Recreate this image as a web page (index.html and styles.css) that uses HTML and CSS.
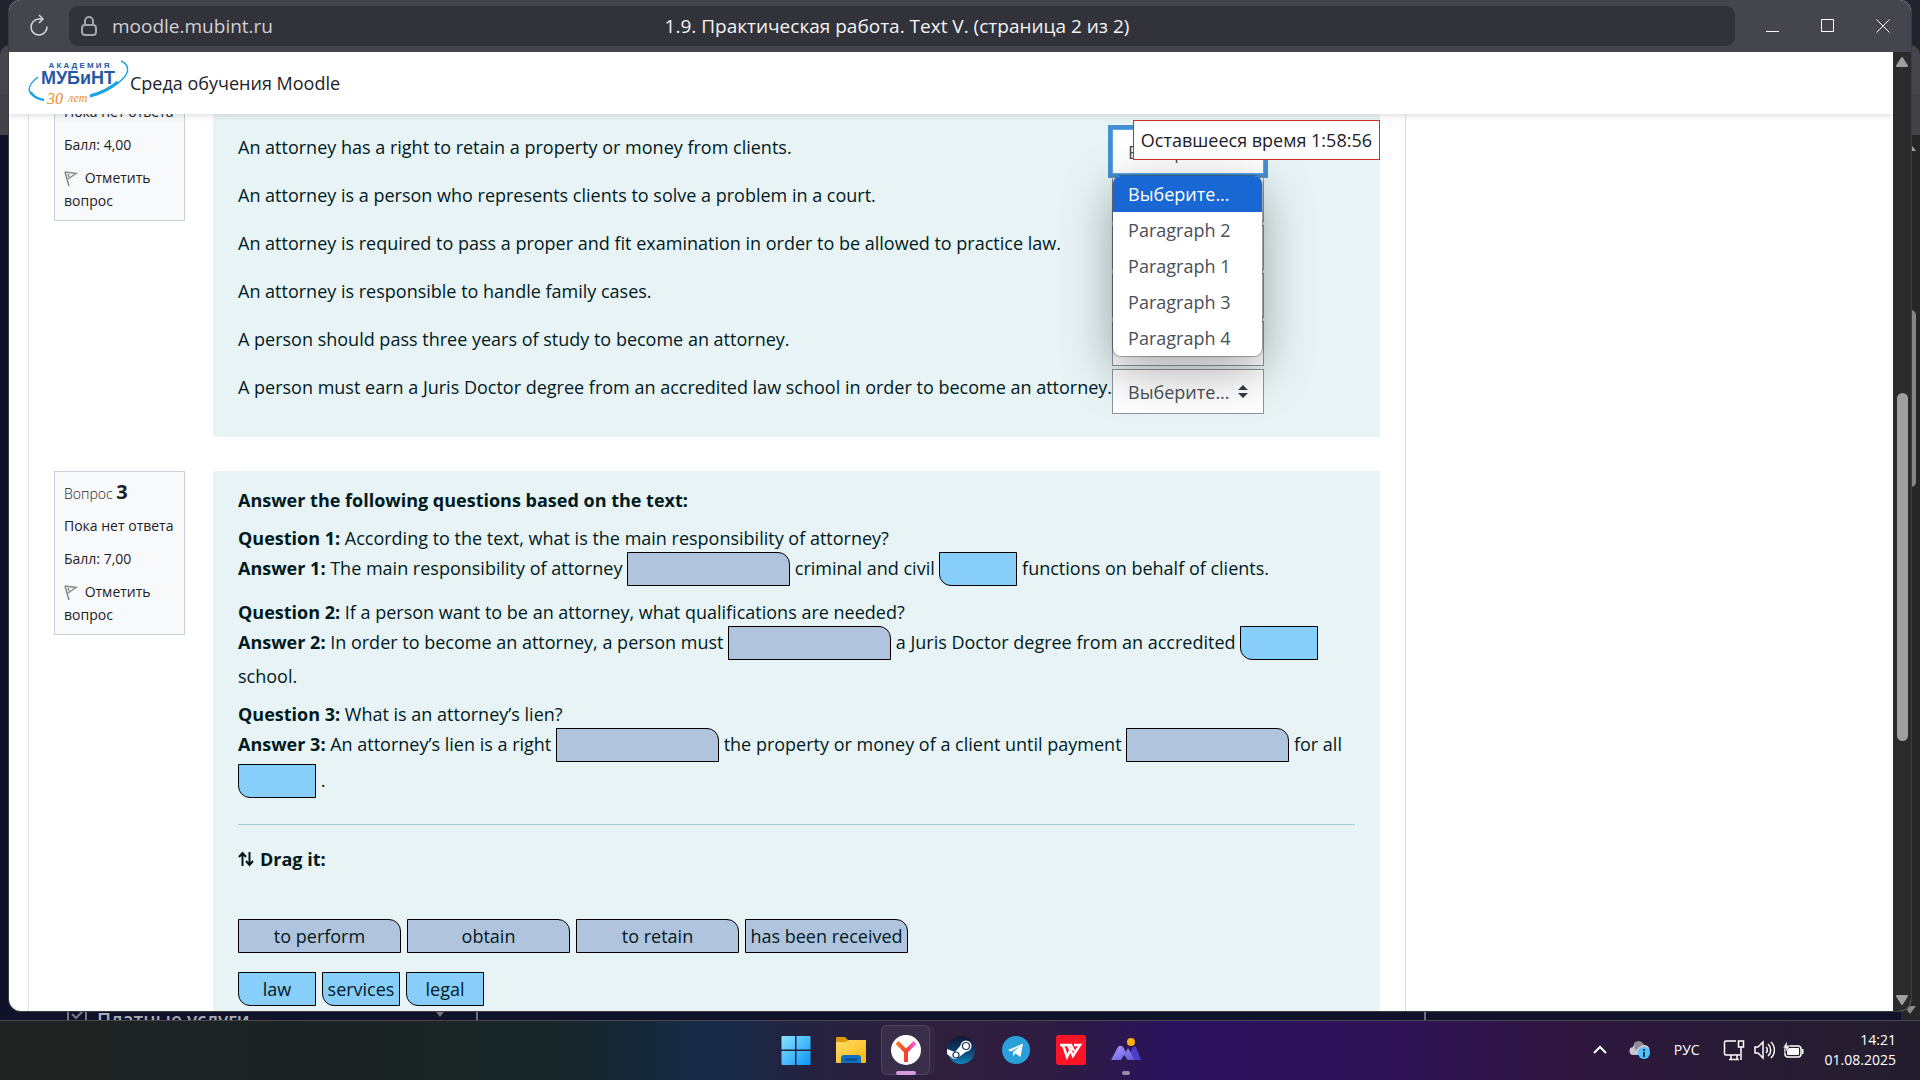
FILE: index.html
```html
<!DOCTYPE html>
<html lang="ru">
<head>
  <meta charset="UTF-8" />
  <meta name="viewport" content="width=device-width, initial-scale=1.0" />
  <title>1.9. Практическая работа. Text V. (страница 2 из 2)</title>
  <link rel="stylesheet" href="styles.css">
</head>
<body>
  <div class="desktop">
    <!-- окно позади -->
    <div class="back-window">
      <div class="back-tabs"></div>
      <div class="back-page"></div>
      <div class="back-scroll">
        <svg class="back-up" width="14" height="10" viewBox="0 0 14 10"><path d="M7 1 13 9H1z" fill="#9f9f9f"/></svg>
        <div class="back-thumb"></div>
        <svg class="back-down" width="14" height="10" viewBox="0 0 14 10"><path d="M1 1h12L7 9z" fill="#8a8a8a"/></svg>
      </div>
      <div class="back-footer">
        <svg width="20" height="20" viewBox="0 0 20 20" fill="none" stroke="#777a86" stroke-width="2"><path d="M1 0v19h18V0"/><path d="m5 4 4 4 7-7"/></svg>
        <span>Платные услуги</span>
        <i class="back-arrow"></i>
        <i class="back-line"></i>
        <i class="back-line back-line-right"></i>
      </div>
    </div>

    <div class="window">
      <header class="titlebar">
        <button class="reload" aria-label="Обновить">
          <svg width="22" height="24" viewBox="0 0 22 24" fill="none" stroke="#d8d8dc" stroke-width="1.500"><path d="M19 12.500A8 8 0 1 1 11 5h4"/><path d="m11 1 4 4-4 4"/></svg>
        </button>
        <div class="address">
          <div class="host">
            <svg width="18" height="20" viewBox="0 0 18 20" fill="none" stroke="#a5a5ac" stroke-width="2"><rect x="2" y="9" width="14" height="10" rx="3"/><path d="M5 9V5a4 4 0 0 1 8 0v4"/></svg>
            <span>moodle.mubint.ru</span>
          </div>
          <div class="page-title">1.9. Практическая работа. Text V. (страница 2 из 2)</div>
        </div>
        <div class="window-buttons">
          <button aria-label="Свернуть"><svg width="14" height="14" viewBox="0 0 14 14"><path d="M0 12.500h13" stroke="#fff"/></svg></button>
          <button aria-label="Развернуть"><svg width="14" height="14" viewBox="0 0 14 14"><path d="M.5.5h12v12H.5z" fill="none" stroke="#fff"/></svg></button>
          <button aria-label="Закрыть"><svg width="14" height="14" viewBox="0 0 14 14"><path d="m.5.5 13 13m0-13-13 13" stroke="#fff"/></svg></button>
        </div>
      </header>

      <div class="viewport">
        <div class="site">
          <nav class="navbar">
            <svg class="logo" width="102" height="46" viewBox="0 0 102 46">
              <path d="M10 17C-3 27-2 36 16 40" fill="none" stroke="#1ba3e8" stroke-width="1.500"/>
              <path d="M3 32c2 4 6 7 13 8" fill="none" stroke="#1ba3e8" stroke-width="2"/>
              <path d="M93 1c12 5 11 21-31 35" fill="none" stroke="#1ba3e8" stroke-width="1.500"/>
              <path d="M62 36c12-3 22-9 28-14" fill="none" stroke="#1ba3e8" stroke-width="3"/>
              <text x="51" y="8" class="logo-top">А К А Д Е М И Я</text>
              <text x="50" y="24" class="logo-name">МУБиНТ</text>
              <text x="19" y="44" class="logo-years">30</text>
              <text x="40" y="42" class="logo-let">лет</text>
            </svg>
            <span>Среда обучения Moodle</span>
          </nav>

          <main class="content">
            <div class="timer">Оставшееся время 1:58:56</div>

            <section class="question">
              <aside class="info">
                <p>Пока нет ответа</p>
                <p>Балл: 4,00</p>
                <a href="#">
                  <svg width="14" height="16" viewBox="0 0 14 16" fill="none" stroke="#888" stroke-width="1.500"><path d="M1 1l4 14M1 1l11 1.500L4 8M4 3l1 3"/></svg>
                  Отметить вопрос
                </a>
              </aside>
              <div class="formulation match">
                <table class="answers">
                  <tr>
                    <td class="text"><label for="sub0">An attorney has a right to retain a property or money from clients.</label></td>
                    <td class="control">
                      <select id="sub0" class="focused"><option>Выберите...</option></select>
                      <ul class="options">
                        <li class="selected">Выберите...</li>
                        <li>Paragraph 2</li>
                        <li>Paragraph 1</li>
                        <li>Paragraph 3</li>
                        <li>Paragraph 4</li>
                      </ul>
                    </td>
                  </tr>
                  <tr>
                    <td class="text"><label for="sub1">An attorney is a person who represents clients to solve a problem in a court.</label></td>
                    <td class="control"><select id="sub1"></select></td>
                  </tr>
                  <tr>
                    <td class="text"><label for="sub2">An attorney is required to pass a proper and fit examination in order to be allowed to practice law.</label></td>
                    <td class="control"><select id="sub2"></select></td>
                  </tr>
                  <tr>
                    <td class="text"><label for="sub3">An attorney is responsible to handle family cases.</label></td>
                    <td class="control"><select id="sub3"></select></td>
                  </tr>
                  <tr>
                    <td class="text"><label for="sub4">A person should pass three years of study to become an attorney.</label></td>
                    <td class="control"><select id="sub4"></select></td>
                  </tr>
                  <tr>
                    <td class="text"><label for="sub5">A person must earn a Juris Doctor degree from an accredited law school in order to become an attorney.</label></td>
                    <td class="control"><select id="sub5"><option>Выберите...</option></select></td>
                  </tr>
                </table>
              </div>
            </section>

            <section class="question">
              <aside class="info">
                <h3>Вопрос <b>3</b></h3>
                <p>Пока нет ответа</p>
                <p>Балл: 7,00</p>
                <a href="#">
                  <svg width="14" height="16" viewBox="0 0 14 16" fill="none" stroke="#888" stroke-width="1.500"><path d="M1 1l4 14M1 1l11 1.500L4 8M4 3l1 3"/></svg>
                  Отметить вопрос
                </a>
              </aside>
              <div class="formulation">
                <p><b>Answer the following questions based on the text:</b></p>
                <p><b>Question 1:</b> According to the text, what is the main responsibility of attorney?<br>
                  <b>Answer 1:</b> The main responsibility of attorney <span class="drop verb"></span> criminal and civil <span class="drop noun"></span> functions on behalf of clients.</p>
                <p><b>Question 2:</b> If a person want to be an attorney, what qualifications are needed?<br>
                  <b>Answer 2:</b> In order to become an attorney, a person must <span class="drop verb"></span> a Juris Doctor degree from an accredited <span class="drop noun"></span> school.</p>
                <p><b>Question 3:</b> What is an attorney’s lien?<br>
                  <b>Answer 3:</b> An attorney’s lien is a right <span class="drop verb"></span> the property or money of a client until payment <span class="drop verb"></span> for all <span class="drop noun"></span> .</p>
                <hr>
                <p class="drag-title">
                  <svg width="16" height="16" viewBox="0 0 16 16" fill="none" stroke="#001a1e" stroke-width="2"><path d="M4.500 15V2M1 6l3.500-4L8 6M11.500 1v13M8 10l3.500 4 3.500-4"/></svg>
                  <b>Drag it:</b>
                </p>
                <div class="choices">
                  <span class="drop verb">to perform</span>
                  <span class="drop verb">obtain</span>
                  <span class="drop verb">to retain</span>
                  <span class="drop verb">has been received</span>
                </div>
                <div class="choices">
                  <span class="drop noun">law</span>
                  <span class="drop noun">services</span>
                  <span class="drop noun">legal</span>
                </div>
              </div>
            </section>
          </main>
        </div>

        <div class="scrollbar">
          <svg width="14" height="10" viewBox="0 0 14 10"><path d="M7 1 12 9H2z" fill="#9f9f9f" stroke="#9f9f9f" stroke-width="2" stroke-linejoin="round"/></svg>
          <div class="track"><div class="thumb"></div></div>
          <svg width="14" height="10" viewBox="0 0 14 10"><path d="M2 1h10L7 9z" fill="#9f9f9f" stroke="#9f9f9f" stroke-width="2" stroke-linejoin="round"/></svg>
        </div>
      </div>
    </div>
  </div>

  <footer class="taskbar">
    <div class="apps">
      <button aria-label="Пуск">
        <svg width="30" height="30" viewBox="0 0 30 30">
          <defs><linearGradient id="win" x1="0" y1="0" x2="1" y2="1"><stop offset="0" stop-color="#8be4ff"/><stop offset="1" stop-color="#0a95fb"/></linearGradient></defs>
          <path d="M1.500 1H14v13.500H.5V2a1 1 0 0 1 1-1zM15.500 1h13a1 1 0 0 1 1 1v12.500h-14zM.5 16H14v14H1.500a1 1 0 0 1-1-1zM15.500 16h14v13a1 1 0 0 1-1 1h-13z" fill="url(#win)"/>
        </svg>
      </button>
      <button aria-label="Проводник">
        <svg width="30" height="30" viewBox="0 0 30 30">
          <defs><linearGradient id="folder" x1="0" y1="0" x2="1" y2="1"><stop offset="0" stop-color="#ffdc6b"/><stop offset="1" stop-color="#f8b70e"/></linearGradient></defs>
          <path d="M0 3a1 1 0 0 1 1-1h8l4 4v4H0z" fill="#dc9a06"/>
          <path d="M0 7h10l3-2h17v22a1 1 0 0 1-1 1H1a1 1 0 0 1-1-1z" fill="url(#folder)"/>
          <path d="M5 28v-5a3 3 0 0 1 3-3h14a3 3 0 0 1 3 3v5z" fill="#0f6fc0"/>
          <path d="M9 24.500h12" stroke="#0a4377" stroke-width="1.500"/>
        </svg>
      </button>
      <button class="active" aria-label="Яндекс Браузер">
        <svg width="30" height="30" viewBox="0 0 30 30">
          <defs><linearGradient id="ya" x1="0" y1="0" x2="1" y2="0"><stop offset="0" stop-color="#ff7a18"/><stop offset=".5" stop-color="#f0402a"/><stop offset="1" stop-color="#ff5be0"/></linearGradient></defs>
          <circle cx="15" cy="15" r="15" fill="#fff"/>
          <path d="m6 7.500 9 9 9-9" fill="none" stroke="url(#ya)" stroke-width="4"/>
          <path d="M15 15v12" stroke="#f4442b" stroke-width="4"/>
        </svg>
      </button>
      <button aria-label="Steam">
        <svg width="30" height="30" viewBox="0 0 30 30">
          <defs><linearGradient id="steam" x1="0" y1="0" x2="0" y2="1"><stop offset="0" stop-color="#111536"/><stop offset=".5" stop-color="#0d3a68"/><stop offset="1" stop-color="#1287bd"/></linearGradient></defs>
          <circle cx="15" cy="15" r="14" fill="url(#steam)"/>
          <path d="m1 14 8 3 6-7 6 6-8 6a5 5 0 0 1-8 0L1 19z" fill="#fff"/>
          <circle cx="20" cy="11" r="5.500" fill="#fff"/><circle cx="20" cy="11" r="3.500" fill="none" stroke="#173055" stroke-width="1.200"/>
          <circle cx="10" cy="20" r="3" fill="none" stroke="#173055" stroke-width="1.200"/>
        </svg>
      </button>
      <button aria-label="Telegram">
        <svg width="30" height="30" viewBox="0 0 30 30">
          <circle cx="15" cy="15" r="14" fill="#2b9fd9"/>
          <path d="m7 15 15-6.500-2.500 13.500-5-3.500-2.500 2.500v-4l7-6-9 5.500z" fill="#fff"/>
        </svg>
      </button>
      <button aria-label="WPS Office">
        <svg width="30" height="30" viewBox="0 0 30 30">
          <rect width="30" height="30" rx="3" fill="#fe1426"/>
          <path d="M4 10h11l3 6M7 10l4 12 4.500-9M12 10l5 11 7-11h-6" fill="none" stroke="#fff" stroke-width="2.500"/>
        </svg>
      </button>
      <button class="running" aria-label="Фотографии">
        <svg width="30" height="30" viewBox="0 0 30 30">
          <defs><linearGradient id="hill" x1="0" y1="0" x2="1" y2="1"><stop offset="0" stop-color="#a79cff"/><stop offset="1" stop-color="#6157d8"/></linearGradient></defs>
          <circle cx="20" cy="7" r="4" fill="#fbae0c"/>
          <path d="m15 25 7-13a2 2 0 0 1 3 0l5 13z" fill="#4b3cc4"/>
          <path d="m0 25 7-13a3 3 0 0 1 5 0l3 5 2-4 7 12h-7l-4-5-3 5z" fill="url(#hill)"/>
        </svg>
      </button>
    </div>
    <div class="tray">
      <svg width="16" height="10" viewBox="0 0 16 10" fill="none" stroke="#fff" stroke-width="2"><path d="m2 8 6-6 6 6"/></svg>
      <svg width="22" height="20" viewBox="0 0 22 20">
        <path d="M5 15a4 4 0 0 1-1-8 6 6 0 0 1 11-2 5 5 0 0 1 1 10z" fill="#c9c4cf"/><path d="M5 3a6 6 0 0 1 10 2c-5 0-6 5-9 5z" fill="#8f8a96"/>
        <circle cx="15" cy="13" r="6" fill="#4cc2ff"/><path d="M15 12v5M15 9v2" stroke="#10304a" stroke-width="2"/>
      </svg>
      <span class="lang">РУС</span>
      <svg class="net" width="22" height="22" viewBox="0 0 22 22" fill="none" stroke="#fff" stroke-width="1.500"><path d="M13 2H3a1.500 1.500 0 0 0-1.500 1.500v11A1.500 1.500 0 0 0 3 16h14M6 20.500h10M8 16v4M14 16v4M15.500 2h5v6h-5zM18 8v13"/></svg>
      <svg width="22" height="20" viewBox="0 0 22 20" fill="none" stroke="#fff" stroke-width="1.500"><path d="M2 7h3l5-5v16l-5-5H2zM13 7a4 4 0 0 1 0 6M15 4a8 8 0 0 1 0 12M18 2a11 11 0 0 1 0 16"/></svg>
      <svg width="22" height="20" viewBox="0 0 22 20"><rect x="2" y="6" width="16" height="11" rx="3" fill="none" stroke="#fff" stroke-width="1.500"/><rect x="4" y="8" width="12" height="7" rx="1" fill="#fff"/><path d="M19 9h1.500v5H19z" fill="#fff"/><path d="M4 1 0 8h3l-1 5 5-7H4z" fill="#fff" stroke="#2b1a38" stroke-width=".5"/></svg>
      <div class="clock"><span>14:21</span><span>01.08.2025</span></div>
    </div>
  </footer>
</body>
</html>
```
FILE: styles.css
```css
* {
  box-sizing: border-box;
}

body {
  margin: 0;
  height: 100vh;
  display: flex;
  flex-direction: column;
  overflow: hidden;
  background: #0f1229;
  font-family: 'Open Sans', 'Noto Sans', sans-serif;
  font-size: 18px;
  line-height: 28px;
  color: #1d2125;
}

button {
  border: none;
  padding: 0;
  background: none;
  display: flex;
  align-items: center;
  justify-content: center;
}

svg {
  display: block;
  flex-shrink: 0;
}

.desktop {
  position: relative;
  flex: 1;
  min-height: 0;
  padding: 0 9px 9px;
}

/* окно позади */
.back-window {
  position: absolute;
  inset: 0;
  overflow: hidden;
  background: #20242d;
}

.back-tabs {
  margin-top: 45px;
  height: 90px;
  border-radius: 10px 10px 0 0;
  background: linear-gradient(#45454b 50px, #3b3b41 50px, #3b3b41 51px, #424248 51px);
}

.back-page {
  height: 100%;
  background: #0f1229;
}

.back-scroll {
  position: absolute;
  top: 135px;
  right: 0;
  bottom: 0;
  width: 19px;
  background: #262626;
}

.back-up,
.back-down {
  position: absolute;
  left: 2px;
}

.back-up {
  top: 7px;
}

.back-down {
  bottom: 5px;
}

.back-thumb {
  position: absolute;
  top: 175px;
  right: 4px;
  width: 10px;
  height: 177px;
  border-radius: 5px;
  background: #858585;
}

.back-footer {
  position: absolute;
  left: 67px;
  right: 19px;
  bottom: -12px;
  height: 24px;
  display: flex;
  align-items: center;
  gap: 10px;
  font-size: 19px;
  font-weight: 600;
  line-height: 24px;
  color: #a9abb5;
}

.back-arrow {
  position: absolute;
  left: 366px;
  top: 0;
  border: 7px solid transparent;
  border-top: 9px solid #777;
}

.back-line {
  position: absolute;
  left: 409px;
  top: 0;
  width: 2px;
  height: 24px;
  background: #70727c;
}

.back-line-right {
  left: 1357px;
}

/* окно браузера */
.window {
  position: relative;
  height: 100%;
  display: flex;
  flex-direction: column;
  overflow: hidden;
  border-radius: 12px;
  background: #fff;
  box-shadow: 0 0 0 1px #3c3c42;
}

.titlebar {
  height: 52px;
  flex-shrink: 0;
  display: flex;
  align-items: center;
  background: #45454e;
}

.reload {
  width: 60px;
  height: 40px;
}

.address {
  flex: 1;
  height: 40px;
  padding: 0 21px 0 11px;
  display: grid;
  grid-template-columns: 1fr auto 1fr;
  align-items: center;
  border-radius: 9px;
  background: #32323b;
  font-size: 19px;
}

.host {
  display: flex;
  align-items: center;
  gap: 14px;
  color: #d0d0d4;
}

.page-title {
  color: #f4f4f4;
}

.window-buttons {
  display: flex;
  margin: 0 1px 0 10px;
}

.window-buttons button {
  width: 55px;
  height: 52px;
}

.viewport {
  flex: 1;
  min-height: 0;
  display: flex;
}

.site {
  flex: 1;
  min-width: 0;
  overflow: hidden;
}

.navbar {
  position: relative;
  z-index: 2;
  height: 62px;
  padding-left: 19px;
  display: flex;
  align-items: center;
  background: #fff;
  box-shadow: 0 2px 6px rgba(0, 0, 0, 0.12);
}

.logo-top {
  font: bold 8px 'Liberation Sans', sans-serif;
  text-anchor: middle;
  fill: #2457a4;
}

.logo-name {
  font: bold 18px 'Liberation Sans', sans-serif;
  text-anchor: middle;
  fill: #2457a4;
}

.logo-years,
.logo-let {
  font: italic 16px 'Liberation Serif', serif;
  fill: #f08a24;
}

.logo-let {
  font-size: 12px;
}

.scrollbar {
  width: 18px;
  padding: 5px 0 6px;
  display: flex;
  flex-direction: column;
  align-items: center;
  background: #2b2b2b;
}

.track {
  flex: 1;
  padding-top: 326px;
}

.thumb {
  width: 11px;
  height: 348px;
  border-radius: 6px;
  background: #9f9f9f;
}

/* вопросы теста */
.content {
  position: relative;
  max-width: 1378px;
  margin: -23px 0 0 19px;
  padding: 0 25px;
  border: 1px solid #dee2e6;
  border-width: 0 1px;
}

.question {
  display: flex;
  align-items: flex-start;
  gap: 28px;
  margin-bottom: 34px;
}

.info {
  width: 131px;
  flex-shrink: 0;
  padding: 8px 9px;
  border: 1px solid #cad0d7;
  background: #f8f9fa;
  font-size: 14px;
  line-height: 23px;
}

.info h3 {
  margin: 0 0 6px;
  font-size: 14px;
  font-weight: 300;
  line-height: 28px;
}

.info h3 b {
  font-size: 20px;
  font-weight: 700;
  line-height: 20px;
}

.info p {
  margin: 0 0 10px;
  white-space: nowrap;
}

.info a {
  display: block;
  color: inherit;
  text-decoration: none;
}

.info a svg {
  display: inline-block;
  margin-right: 3px;
  vertical-align: -4px;
}

.formulation {
  flex: 1;
  padding: 15px 25px 22px;
  background: #e7f3f5;
  color: #001a1e;
}

.formulation p {
  margin: 0 0 10px;
}

.match {
  padding-top: 38px;
}

.answers {
  border-collapse: collapse;
}

.answers tr {
  height: 48px;
}

.answers tr:last-child {
  height: 46px;
}

.answers td {
  padding: 0;
  vertical-align: top;
}

.answers .text {
  width: 873px;
  padding-top: 4px;
  white-space: nowrap;
}

.control {
  position: relative;
}

select {
  display: block;
  width: 152px;
  height: 45px;
  padding: 0 15px;
  border: 1px solid #8f959e;
  border-radius: 0;
  appearance: none;
  background: #fff url("data:image/svg+xml,%3Csvg xmlns='http://www.w3.org/2000/svg' viewBox='0 0 10 13'%3E%3Cpath fill='%23343a40' d='M5 0 0 5h10zM5 13 0 8h10z'/%3E%3C/svg%3E") no-repeat right 15px center / 10px 13px;
  font: inherit;
  color: #495057;
}

.focused {
  border-color: #5aa5ee;
  outline: 4px solid #4590d0;
}

.options {
  position: absolute;
  z-index: 1;
  top: 47px;
  left: 1px;
  width: 149px;
  margin: 0;
  padding: 0;
  overflow: hidden;
  list-style: none;
  border-radius: 8px;
  background: #fff;
  box-shadow: 0 0 1px 1px rgba(0, 0, 0, 0.3), 0 14px 50px rgba(0, 0, 0, 0.35);
  line-height: 36px;
  color: #495057;
}

.options li {
  padding-left: 15px;
}

.options .selected {
  background: #1967d2;
  color: #fff;
}

.timer {
  position: absolute;
  z-index: 2;
  top: 29px;
  right: 25px;
  padding: 5px 7px;
  border: 1px solid #ca3120;
  background: #fff;
}

.drop {
  display: inline-block;
  height: 34px;
  margin-bottom: 2px;
  border: 1px solid #000;
  line-height: 32px;
  text-align: center;
  vertical-align: middle;
}

.verb {
  width: 163px;
  border-radius: 0 12px 0 0;
  background: #b0c4de;
}

.noun {
  width: 78px;
  border-radius: 0 0 0 12px;
  background: #87cefa;
}

hr {
  margin: 24px 0 20px;
  border: none;
  border-top: 1px solid #a6cdd3;
}

.formulation .drag-title {
  display: flex;
  align-items: center;
  gap: 6px;
  margin-bottom: 46px;
}

.choices {
  display: flex;
  gap: 6px;
  margin-bottom: 17px;
}

/* панель задач */
.taskbar {
  height: 60px;
  flex-shrink: 0;
  display: grid;
  grid-template-columns: 1fr auto 1fr;
  align-items: center;
  padding-left: 2px;
  padding-bottom: 1px;
  border-top: 1px solid #4a464f;
  background: linear-gradient(90deg, #1f2322 0%, #1a2423 22%, #17272b 30%, #152a48 37%, #24223f 42%, #2f1e3c 50%, #2e1b45 56%, #2b125e 61%, #2f1358 72%, #2e163f 82%, #261c32 93%, #241d2e 100%);
}

.apps {
  grid-column: 2;
  display: flex;
}

.apps button {
  position: relative;
  width: 55px;
  height: 58px;
}

.active::before {
  content: '';
  position: absolute;
  inset: 4px 4px 4px 2px;
  border: 1px solid rgba(255, 255, 255, 0.1);
  border-radius: 6px;
  background: rgba(255, 255, 255, 0.07);
  box-shadow: 5px 0 0 rgba(255, 255, 255, 0.04);
}

.active svg {
  position: relative;
}

.active::after,
.running::after {
  content: '';
  position: absolute;
  bottom: 4px;
  width: 20px;
  height: 4px;
  border-radius: 2px;
  background: #d99be0;
}

.running::after {
  width: 8px;
  background: #9a90a6;
}

.tray {
  justify-self: end;
  display: flex;
  align-items: center;
  padding-right: 24px;
  gap: 8px;
  font-size: 14px;
  line-height: 20px;
  color: #fff;
}

.tray > svg:first-child {
  margin-right: 13px;
}

.lang {
  margin: 0 15px;
}

.clock {
  display: flex;
  flex-direction: column;
  align-items: flex-end;
  margin-left: 12px;
}
```
